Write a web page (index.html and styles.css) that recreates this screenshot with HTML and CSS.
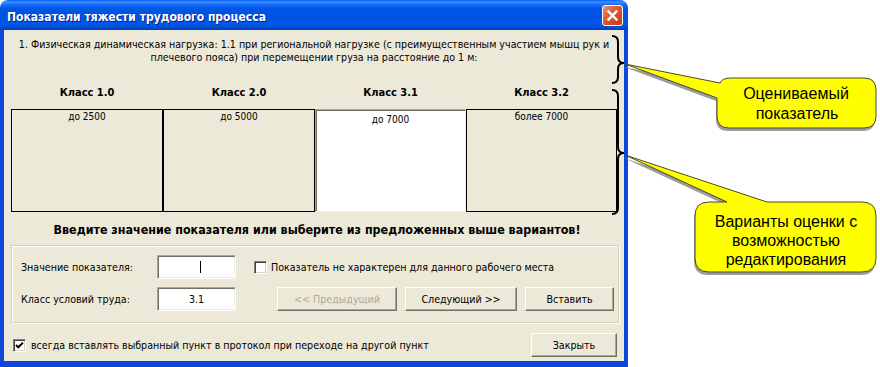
FILE: index.html
```html
<!DOCTYPE html>
<html lang="ru">
<head>
<meta charset="utf-8">
<title>Показатели тяжести трудового процесса</title>
<link rel="stylesheet" href="styles.css">
</head>
<body>
<div class="window">
  <div class="titlebar">
    <span class="title">Показатели тяжести трудового процесса</span>
    <span class="close"><svg width="13" height="13" viewBox="0 0 13 13"><path d="M2.5 2.5 L10.5 10.5 M10.5 2.5 L2.5 10.5" stroke="#fff" stroke-width="2.4" stroke-linecap="square"/></svg></span>
  </div>
  <div class="client">
    <p class="desc">1. Физическая динамическая нагрузка: 1.1 при региональной нагрузке (с преимущественным участием мышц рук и<br>плечевого пояса) при перемещении груза на расстояние до 1 м:</p>
    <div class="cols heads">
      <div>Класс 1.0</div>
      <div>Класс 2.0</div>
      <div>Класс 3.1</div>
      <div>Класс 3.2</div>
    </div>
    <div class="cols boxes">
      <div class="box">до 2500</div>
      <div class="box">до 5000</div>
      <div class="box sel">до 7000</div>
      <div class="box">более 7000</div>
    </div>
    <p class="prompt">Введите значение показателя или выберите из предложенных выше вариантов!</p>
    <div class="group">
      <div class="row">
        <span class="lbl">Значение показателя:</span>
        <span class="field"><span class="caret"></span></span>
        <span class="check"></span>
        <span class="chk-lbl">Показатель не характерен для данного рабочего места</span>
      </div>
      <div class="row">
        <span class="lbl">Класс условий труда:</span>
        <span class="field">3.1</span>
        <span class="buttons">
          <button class="btn disabled w1">&lt;&lt; Предыдущий</button>
          <button class="btn w2">Следующий &gt;&gt;</button>
          <button class="btn w3">Вставить</button>
        </span>
      </div>
    </div>
    <div class="footer">
      <span class="check checked"><svg width="11" height="11" viewBox="0 0 11 11"><path d="M2 5 L4.3 7.3 L9 2.6" fill="none" stroke="#000" stroke-width="2"/></svg></span>
      <span class="foot-lbl">всегда вставлять выбранный пункт в протокол при переходе на другой пункт</span>
      <button class="btn close-btn">Закрыть</button>
    </div>
  </div>
</div>
<svg class="annot" width="880" height="367" viewBox="0 0 880 367">
  <path class="brace" d="M612,36 Q618,36 618,42 L618,57 Q618,63 624,63 Q618,63 618,69 L618,77 Q618,83 612,83"/>
  <path class="brace" d="M612,90 Q618,90 618,96 L618,147 Q618,153 624,153 Q618,153 618,159 L618,208 Q618,214 612,214"/>
  <g transform="translate(-1,3)">
    <path class="cshadow" d="M731,78 H864 Q876,78 876,90 V116 Q876,128 864,128 H729 Q717,128 717,116 V98 L625,64 L720,83 Q722,78 731,78 Z"/>
    <path class="cshadow" d="M709,202 H727 L625,155 L767,202 H862 Q876,202 876,216 V258 Q876,272 862,272 H709 Q695,272 695,258 V216 Q695,202 709,202 Z"/>
  </g>
  <path class="callout" d="M731,78 H864 Q876,78 876,90 V116 Q876,128 864,128 H729 Q717,128 717,116 V98 L625,64 L720,83 Q722,78 731,78 Z"/>
  <path class="callout" d="M709,202 H727 L625,155 L767,202 H862 Q876,202 876,216 V258 Q876,272 862,272 H709 Q695,272 695,258 V216 Q695,202 709,202 Z"/>
  <text class="ctext" x="796" y="99">Оцениваемый</text>
  <text class="ctext" x="797" y="119">показатель</text>
  <text class="ctext" x="786" y="227">Варианты оценки с</text>
  <text class="ctext" x="786" y="246">возможностью</text>
  <text class="ctext" x="786" y="265">редактирования</text>
</svg>
</body>
</html>
```
FILE: styles.css
```css
body {
  margin: 0;
  background: #fff;
  font-family: "DejaVu Sans Condensed", "DejaVu Sans", sans-serif;
  font-size: 10.6px;
  color: #000;
  position: relative;
  width: 880px;
  height: 367px;
  overflow: hidden;
}

.window {
  width: 628px;
  height: 367px;
  display: flex;
  flex-direction: column;
}

.titlebar {
  height: 30px;
  box-sizing: border-box;
  padding: 0 5px 0 7px;
  display: flex;
  align-items: center;
  justify-content: space-between;
  border-radius: 8px 8px 0 0;
  background: linear-gradient(to bottom, #0A5FFF 0%, #3C8FFF 7%, #1670FA 14%, #0054E3 30%, #0054E3 60%, #005AEE 80%, #004AC9 94%, #003DA5 100%);
}

.title {
  font-weight: bold;
  font-size: 12px;
  color: #fff;
  text-shadow: 1px 1px 0 #0A1A8A;
  padding-top: 3px;
}

.close {
  width: 21px;
  height: 21px;
  box-sizing: border-box;
  border: 1px solid #fff;
  border-radius: 3px;
  background: linear-gradient(135deg, #EC9B7C 0%, #E0603A 35%, #D44A1E 70%, #C23B12 100%);
  display: flex;
  align-items: center;
  justify-content: center;
}

.client {
  flex: 1;
  box-sizing: border-box;
  border-style: solid;
  border-color: #0A47DA;
  border-width: 0 4px 6px 4px;
  background: #ECE9D8;
  display: flex;
  flex-direction: column;
}

.desc {
  margin: 8px 0 0;
  line-height: 13px;
  text-align: center;
  white-space: nowrap;
}

.cols {
  display: grid;
  grid-template-columns: 152px 152px 151px 151px;
  margin-left: 7px;
}

.heads {
  margin-top: 22px;
  height: 13px;
  line-height: 13px;
  font-size: 11px;
  font-weight: bold;
  text-align: center;
}

.boxes {
  margin-top: 10px;
  height: 103px;
}

.box {
  border: 1px solid #000;
  box-sizing: border-box;
  text-align: center;
  font-size: 10px;
  line-height: 12px;
  padding-top: 1px;
}

.box.sel {
  background: #fff;
  border-color: #ACA899 #F1EFE2 #F1EFE2 #ACA899;
  box-shadow: inset 1px 1px 0 #716F64;
  padding-top: 4px;
}

.prompt {
  margin: 10px 0 0 6px;
  height: 16px;
  line-height: 16px;
  text-align: center;
  font-weight: bold;
  font-size: 12.4px;
  white-space: nowrap;
}

.group {
  margin: 7px 0 0 7px;
  width: 608px;
  height: 78px;
  box-sizing: border-box;
  border: 1px solid #D0D0BF;
  box-shadow: inset 1px 1px 0 #fff, 1px 1px 0 #fff;
  padding: 9px 0 0 9px;
}

.row {
  display: flex;
  align-items: center;
  height: 24px;
}

.row + .row {
  margin-top: 8px;
}

.lbl {
  width: 136px;
}

.field {
  width: 79px;
  height: 24px;
  box-sizing: border-box;
  background: #fff;
  border: 1px solid;
  border-color: #ACA899 #fff #fff #ACA899;
  box-shadow: inset 1px 1px 0 #716F64, inset -1px -1px 0 #F1EFE2;
  display: flex;
  align-items: center;
  justify-content: center;
}

.caret {
  width: 1px;
  height: 12px;
  background: #000;
  margin-left: 8px;
}

.check {
  width: 13px;
  height: 13px;
  box-sizing: border-box;
  background: #fff;
  border: 1px solid;
  border-color: #808080 #fff #fff #808080;
  box-shadow: inset 1px 1px 0 #404040, inset -1px -1px 0 #D4D0C8;
  margin-left: 18px;
  display: flex;
  align-items: center;
  justify-content: center;
}

.chk-lbl {
  margin-left: 4px;
}

.buttons {
  display: flex;
  gap: 8px;
  margin-left: 41px;
}

.btn {
  height: 24px;
  box-sizing: border-box;
  font: inherit;
  color: #000;
  background: #ECE9D8;
  border: 1px solid;
  border-color: #fff #716F64 #716F64 #fff;
  box-shadow: inset -1px -1px 0 #ACA899;
  padding: 0;
}

.w1 { width: 120px; }
.w2 { width: 112px; }
.w3 { width: 89px; }

.btn.disabled {
  color: #ACA899;
}

.footer {
  display: flex;
  align-items: center;
  margin: 10px 7px 0 9px;
  height: 24px;
}

.footer .check {
  margin-left: 0;
}

.foot-lbl {
  margin-left: 5px;
}

.close-btn {
  margin-left: auto;
  width: 86px;
}

.annot {
  position: absolute;
  left: 0;
  top: 0;
  pointer-events: none;
}

.brace {
  fill: none;
  stroke: #000;
  stroke-width: 2;
}

.cshadow {
  fill: #9C9C9C;
}

.callout {
  fill: #FFFF00;
  stroke: #4A4A2A;
  stroke-width: 1;
}

.ctext {
  font-family: "Liberation Sans", Arial, sans-serif;
  font-size: 16px;
  fill: #000;
  text-anchor: middle;
}
```
